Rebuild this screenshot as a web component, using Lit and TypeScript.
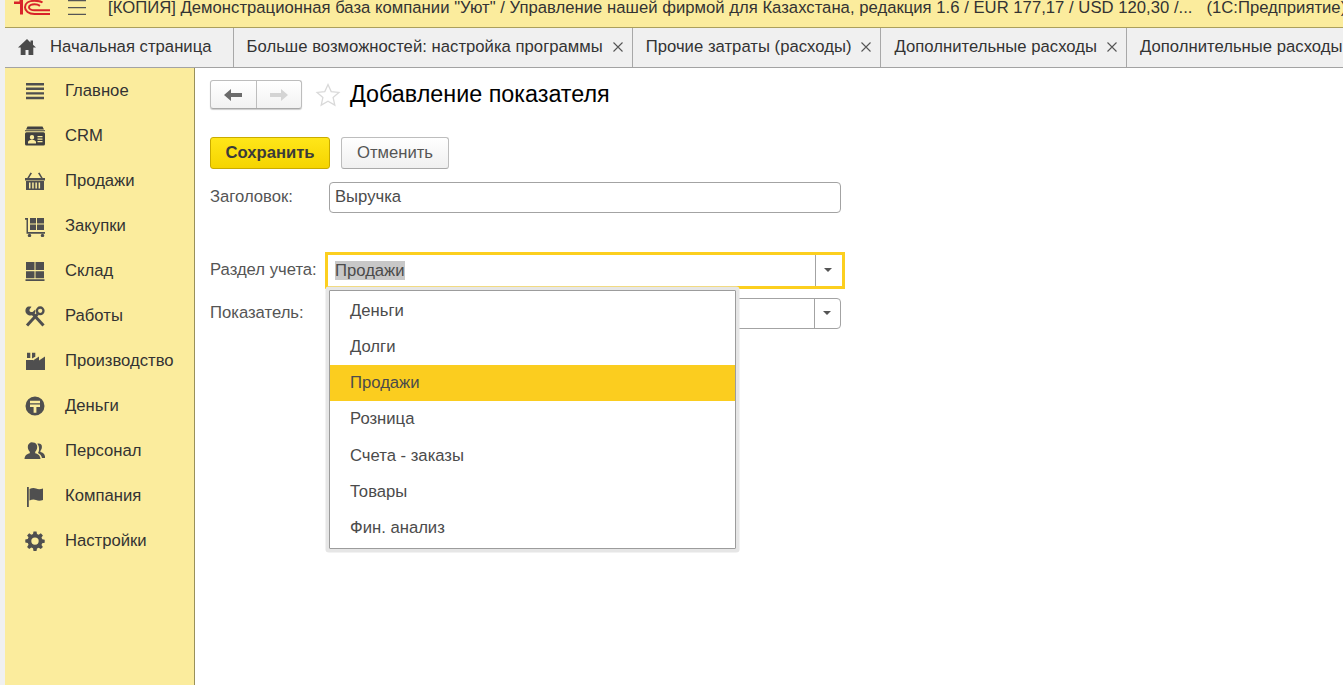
import { LitElement, html, css, svg } from "lit";
import { customElement } from "lit/decorators.js";

const icons: Record<string, unknown> = {
  main: svg`<path d="M2 3h18v2.400H2zM2 7.600h18V10H2zM2 12.200h18v2.400H2zM2 16.800h18v2.400H2z"/>`,
  crm: svg`<path d="M3.500 1.500h15l1.500 3H2zM1 5.300h20v1H1z" fill="#404040"/><path fill="#404040" fill-rule="evenodd" d="M2.500 7.300h17A1.500 1.500 0 0 1 21 8.800v10.200a1.500 1.500 0 0 1-1.500 1.500h-17A1.500 1.500 0 0 1 1 19V8.800a1.500 1.500 0 0 1 1.500-1.500zM8 10a2.200 2.200 0 1 0 0 4.400A2.200 2.200 0 0 0 8 10zM4 18.500h8v-1.500c0-1.300-1.700-2.300-4-2.300s-4 1-4 2.300zM13.500 11v1.200h5V11zM13.500 13.500v1.200h5v-1.200zM13.500 16v1.200h5V16z"/>`,
  sales: svg`<path d="M1 8h20v2.500H1z"/><path d="M6.500 2.500 8 3.300 5 8H3.300zM15.500 2.500 14 3.300 17 8h1.700z"/><path fill-rule="evenodd" d="M2 11h18v9H2zM5 12.500v6h1.500v-6zM8.200 12.500v6h1.500v-6zM11.400 12.500v6h1.500v-6zM14.600 12.500v6h1.500v-6z"/>`,
  buy: svg`<path d="M1 3h3v14h17v1.800H2.500V4.800H1z"/><path d="M6 3h6v5.500H6zM13 3h7v5.500h-7zM6 9.500h6V15H6zM13 9.500h7V15h-7z"/><circle cx="5.500" cy="20.500" r="1.700"/><circle cx="18.500" cy="20.500" r="1.700"/>`,
  store: svg`<path d="M2 2h8.500v8H2zM11.500 2H20v8h-8.500zM2 11.300h8.500v7H2zM11.500 11.300H20v7h-8.500zM1.500 19.300h19V21h-19z"/>`,
  work: svg`<path d="M3 20.500 13.500 9" stroke="#4f4f4f" stroke-width="3" fill="none"/><circle cx="16.200" cy="5.800" r="3.300" stroke="#4f4f4f" stroke-width="2.300" fill="none"/><path d="M19.500 20.500 8.500 8.500" stroke="#4f4f4f" stroke-width="3" fill="none"/><path d="M3.500 1.800C1 3.500.8 7.200 3 9.200c2 1.800 5 1.700 6.800.2 1.500-1.300 2-3.300 1.400-5L9.200 6.500c-1 .8-2.400.8-3.200 0-.7-.8-.7-2 0-2.800L7.500 1.800c-1.400-.6-2.800-.5-4 0z"/>`,
  prod: svg`<path d="M2 10V20h19V6.500l-6 4v-4l-6 4V10z"/><path d="M3 2.800h3.300V8H3zM8 2.800h3.300v4L8 8.500z"/>`,
  money: svg`<path fill-rule="evenodd" d="M11 1.500a9.500 9.500 0 1 1 0 19 9.500 9.500 0 0 1 0-19zM6 5.800v2.400h10V5.800zM6 9.600V12h3.600v5.800h2.800V12H16V9.600z"/>`,
  staff: svg`<path d="M9 2.500a4.200 4.200 0 0 1 4.200 4.500c0 2-1 3.800-2 4.800v1.400c3 .8 5 2 5.300 5.800H.5c.3-3.800 2.300-5 5.300-5.800v-1.400c-1-1-2-2.800-2-4.800A4.200 4.200 0 0 1 9 2.500z"/><path d="M14.500 3.500a3.400 3.400 0 0 1 3.400 3.600c0 1.600-.8 3-1.500 3.800v1.200c2.500.6 4.300 1.700 4.600 4.400V18H18c-.5-2.300-1.700-4-4-5 1-1.500 1.200-3.500 1-5-.1-1.500-.7-3-1.700-4.200.4-.2.800-.3 1.200-.3z"/>`,
  org: svg`<path d="M3 2h1.800v21H3z"/><path d="M5.500 4C8 2.800 10 2.600 12 3.500c2 .9 4.500.8 7 0V15c-2.500.8-5 .9-7 0-2-.9-4-.7-6.500.5z"/>`,
  gear: svg`<path fill-rule="evenodd" d="M9.500 1.500h3l.5 2.500 1.700.7L16.800 3.300 18.900 5.400 17.500 7.500l.7 1.700 2.500.5v3l-2.500.5-.7 1.700 1.400 2.100-2.100 2.100-2.100-1.400-1.700.7-.5 2.500h-3L9 18.300l-1.700-.7-2.100 1.400-2.100-2.100 1.400-2.100-.7-1.700-2.500-.5v-3L3.800 9l.7-1.700L3.100 5.400 5.200 3.300l2.100 1.400L9 4zM11 7.400a3.700 3.700 0 1 0 0 7.400 3.700 3.700 0 0 0 0-7.400z"/>`,
};

const nav: [string, string][] = [
  ["main", "Главное"], ["crm", "CRM"], ["sales", "Продажи"], ["buy", "Закупки"], ["store", "Склад"],
  ["work", "Работы"], ["prod", "Производство"], ["money", "Деньги"], ["staff", "Персонал"], ["org", "Компания"], ["gear", "Настройки"],
];
const tabs: [string, boolean][] = [
  ["Больше возможностей: настройка программы", true],
  ["Прочие затраты (расходы)", true],
  ["Дополнительные расходы", true],
  ["Дополнительные расходы", false],
];
const options = ["Деньги", "Долги", "Продажи", "Розница", "Счета - заказы", "Товары", "Фин. анализ"];

@customElement("app-root")
export class AppRoot extends LitElement {
  static styles = css`
    :host { display: block; width: 1343px; height: 685px; overflow: hidden; background: #f0f0f0; font-family: "Liberation Sans", Arial, sans-serif; font-size: 16.67px; color: #4b4b4b; }
    .shell { margin-left: 5px; height: 685px; display: flex; flex-direction: column; }
    .head { height: 27px; flex: none; background: #fbec9d; border-bottom: 1px solid #ab9f5c; display: flex; align-items: flex-start; white-space: nowrap; overflow: hidden; }
    .logo { width: 38px; height: 16px; margin-left: 8px; flex: none; }
    .burger { width: 18px; height: 15px; margin-left: 17px; flex: none; }
    .title { margin-left: 22px; color: #333; letter-spacing: 0.02px; line-height: 15px; }
    .title2 { margin-left: 14px; color: #333; line-height: 15px; }
    .tabs { height: 39px; flex: none; background: #f0f0f0; border-bottom: 1px solid #a3a3a3; display: flex; white-space: nowrap; overflow: hidden; }
    .tab { display: flex; align-items: center; border-right: 1px solid #a8a8a8; padding: 0 9px 2px 13px; color: #333; flex: none; letter-spacing: 0.02px; }
    .tab.last { border-right: 0; }
    .home { padding: 0 21px 2px 12px; }
    .home svg { width: 20px; height: 18px; margin-right: 13px; fill: #4b4b4b; }
    .x { width: 10px; height: 10px; margin-left: 10px; stroke: #555; stroke-width: 1.100; fill: none; }
    .body { flex: 1; display: flex; min-height: 0; }
    .side { width: 189px; flex: none; background: #fbec9d; border-right: 1px solid #99905a; }
    .nav { height: 45px; display: flex; align-items: center; color: #333; padding-left: 19px; }
    .nav svg { width: 22px; height: 22px; margin-right: 19px; fill: #4f4f4f; flex: none; }
    .main { position: relative; flex: 1; background: #fff; padding: 12px 0 0 15px; }
    .top { display: flex; align-items: center; height: 29px; }
    .nav-btns { display: flex; width: 92px; height: 29px; border: 1px solid #bdbdbd; border-bottom-color: #a9a9a9; border-radius: 3px; background: linear-gradient(#fff, #f2f2f2); box-sizing: border-box; box-shadow: 0 1px 1px #ccc; }
    .nav-btns div { flex: 1; display: flex; align-items: center; justify-content: center; }
    .nav-btns div:first-child { border-right: 1px solid #bdbdbd; }
    .nav-btns svg { width: 18px; height: 14px; }
    .star { width: 26px; height: 26px; margin: 0 9px 0 13px; fill: #fff; stroke: #d9d9d9; stroke-width: 1.300; }
    h1 { margin: 0; font-weight: 400; font-size: 23.33px; color: #000; }
    .actions { display: flex; gap: 11px; margin-top: 28px; }
    .btn { box-sizing: border-box; height: 32px; display: flex; align-items: center; justify-content: center; border-radius: 3px; }
    .save { width: 120px; background: linear-gradient(#ffe619, #f5d400); border: 1px solid #c9ab00; font-weight: 700; color: #3a3a3a; }
    .cancel { width: 108px; background: linear-gradient(#fff, #f0f0f0); border: 1px solid #bdbdbd; border-bottom-color: #a9a9a9; color: #555; }
    .row { display: flex; align-items: center; }
    .row label { width: 119px; flex: none; color: #555; padding-bottom: 2px; }
    .field { box-sizing: border-box; width: 512px; height: 31px; border: 1px solid #a3a3a3; border-radius: 4px; display: flex; align-items: center; padding: 0 0 2px 5px; color: #4b4b4b; background: #fff; }
    .r1 { margin-top: 13px; }
    .r2 { margin-top: 39px; height: 37px; }
    .r3 { margin-top: 9px; }
    .field.focus { width: 520px; height: 37px; margin-left: -4px; border: 3px solid #fccf1f; border-radius: 0; padding: 0 0 0 7px; }
    .text { flex: 1; }
    .sel { background: #c8c8c8; }
    .drop { box-sizing: border-box; width: 26px; align-self: stretch; flex: none; border-left: 1px solid #a3a3a3; display: flex; align-items: center; justify-content: center; margin-bottom: -2px; padding-right: 2px; }
    .focus .drop { width: 27px; margin-bottom: 0; }
    .drop i { width: 0; height: 0; border: 4.500px solid transparent; border-top: 4.500px solid #555; border-bottom: 0; margin-top: -1px; }
    .pop { position: absolute; left: 134px; top: 222px; width: 407px; height: 259px; box-sizing: border-box; background: #fff; border: 1px solid #9c9c9c; box-shadow: 0 0 0 3.500px #e6e6e6; border-radius: 1px; padding-top: 1.500px; }
    .opt { height: 36.250px; display: flex; align-items: center; padding-left: 20px; color: #4b4b4b; }
    .opt.on { background: #fbcd1f; }
  `;

  render() {
    return html`<div class="shell">
      <div class="head">
        <svg class="logo" viewBox="0 0 38 16" fill="none" stroke="#d8232a" stroke-width="2">
          <path d="M1 1.500h5.500V0H10v14.500H7V4H1z" fill="#d8232a" stroke="none"/>
          <path d="M29.500 2.500C27.500 1.200 24.800.8 21.500.8 15.500.8 12 3.500 12 7.200s3.500 6.800 9.500 6.800H37"/>
          <path d="M27 5.800C25.500 4.800 23.800 4.300 21.500 4.300c-3 0-5.500 1.300-5.500 3s2.500 3 5.500 3H37"/>
        </svg>
        <svg class="burger" viewBox="0 0 18 15"><path d="M0 0h18v1.200H0zM0 7h18v1.200H0zM0 13.800h18V15H0z" fill="#555"/></svg>
        <span class="title">[КОПИЯ] Демонстрационная база компании "Уют" / Управление нашей фирмой для Казахстана, редакция 1.6 / EUR 177,17 / USD 120,30 /...</span>
        <span class="title2">(1С:Предприятие)</span>
      </div>
      <div class="tabs">
        <div class="tab home"><svg viewBox="0 0 20 18"><path d="M10 1 1 9.500h2.700V17h4.800v-5h3v5h4.800V9.500H19l-3-2.800V2.500h-2.500v1.900z"/></svg>Начальная страница</div>
        ${tabs.map(([t, x]) => html`<div class="tab ${x ? "" : "last"}">${t}${x ? html`<svg class="x" viewBox="0 0 10 10"><path d="M.5.5l9 9M9.500.5l-9 9"/></svg>` : ""}</div>`)}
      </div>
      <div class="body">
        <div class="side">
          ${nav.map(([i, t]) => html`<div class="nav"><svg viewBox="0 0 22 22">${icons[i]}</svg>${t}</div>`)}
        </div>
        <div class="main">
          <div class="top">
            <div class="nav-btns">
              <div><svg viewBox="0 0 18 14"><path d="M0 7 7 1v4h11v4H7v4z" fill="#6b6b6b"/></svg></div>
              <div><svg viewBox="0 0 18 14"><path d="M18 7l-7-6v4H0v4h11v4z" fill="#d4d4d4"/></svg></div>
            </div>
            <svg class="star" viewBox="0 0 26 26"><path d="M13 2.500l3.200 7.100 7.700.8-5.800 5.100 1.700 7.600-6.800-3.900-6.800 3.900 1.700-7.600-5.800-5.100 7.700-.8z"/></svg>
            <h1>Добавление показателя</h1>
          </div>
          <div class="actions">
            <div class="btn save">Сохранить</div>
            <div class="btn cancel">Отменить</div>
          </div>
          <div class="row r1"><label>Заголовок:</label><div class="field">Выручка</div></div>
          <div class="row r2"><label>Раздел учета:</label><div class="field focus"><span class="text"><span class="sel">Продажи</span></span><div class="drop"><i></i></div></div></div>
          <div class="row r3"><label>Показатель:</label><div class="field"><span class="text"></span><div class="drop"><i></i></div></div></div>
          <div class="pop">
            ${options.map((o) => html`<div class="opt ${o === "Продажи" ? "on" : ""}">${o}</div>`)}
          </div>
        </div>
      </div>
    </div>`;
  }
}
